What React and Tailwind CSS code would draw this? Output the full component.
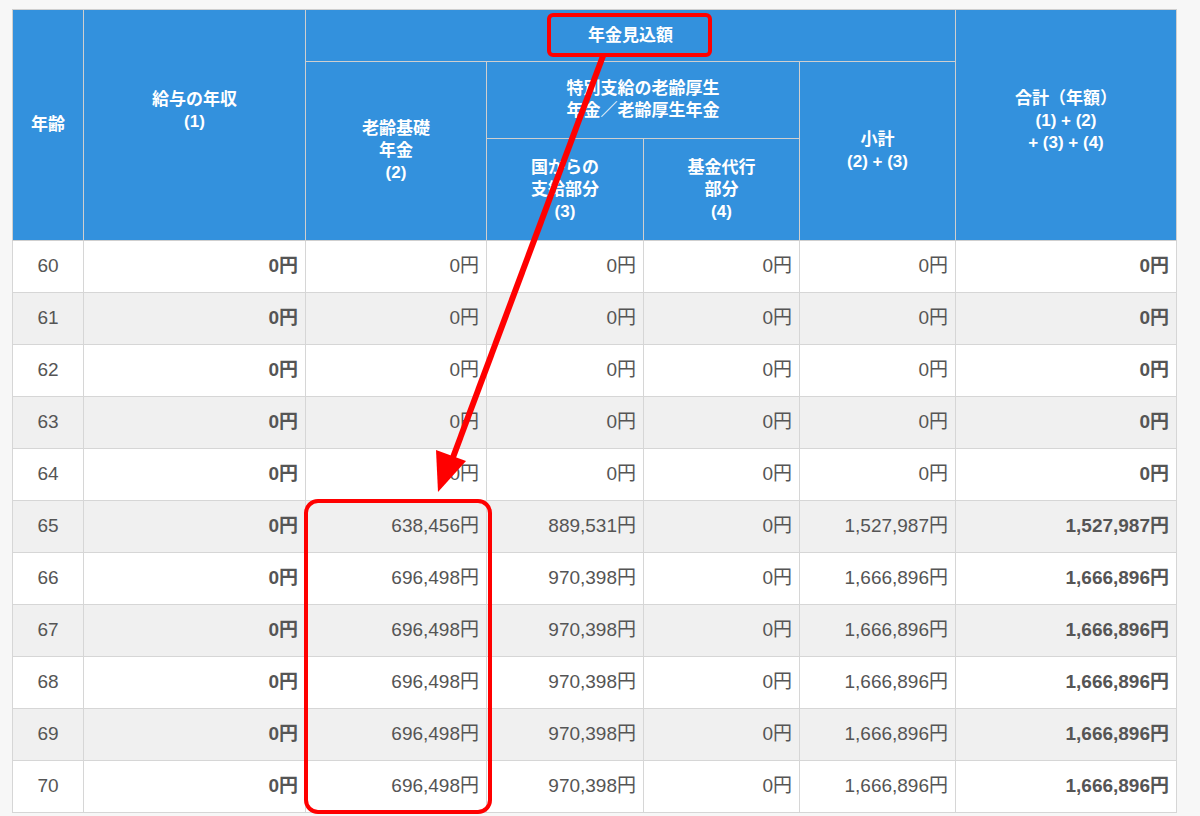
export default function App() {
  const rows = [
    [60,'0円','0円','0円','0円','0円','0円'],
    [61,'0円','0円','0円','0円','0円','0円'],
    [62,'0円','0円','0円','0円','0円','0円'],
    [63,'0円','0円','0円','0円','0円','0円'],
    [64,'0円','0円','0円','0円','0円','0円'],
    [65,'0円','638,456円','889,531円','0円','1,527,987円','1,527,987円'],
    [66,'0円','696,498円','970,398円','0円','1,666,896円','1,666,896円'],
    [67,'0円','696,498円','970,398円','0円','1,666,896円','1,666,896円'],
    [68,'0円','696,498円','970,398円','0円','1,666,896円','1,666,896円'],
    [69,'0円','696,498円','970,398円','0円','1,666,896円','1,666,896円'],
    [70,'0円','696,498円','970,398円','0円','1,666,896円','1,666,896円'],
  ];
  const th = "border border-[#cfcfcf] bg-[#3391dd] text-white font-bold text-[17px] leading-[22px] text-center align-middle";
  const td = "border border-[#d6d6d6] text-[19px] text-right pr-[7px] h-[52px]";
  return (
    <div className="relative w-[1200px] h-[816px] overflow-hidden bg-[#f7f7f7] pl-[12px] pt-[9px] text-[#555]" style={{fontFamily:'"Liberation Sans", "Noto Sans CJK JP", sans-serif'}}>
      <table className="table-fixed border-collapse w-[1164px]">
        <colgroup>
          <col className="w-[71px]"/><col className="w-[222px]"/><col className="w-[181px]"/><col className="w-[157px]"/><col className="w-[156px]"/><col className="w-[156px]"/><col className="w-[221px]"/>
        </colgroup>
        <thead>
          <tr className="h-[52px]">
            <th rowSpan={3} className={th}>年齢</th>
            <th rowSpan={3} className={th}><div className="-mt-[28px]">給与の年収<br/>(1)</div></th>
            <th colSpan={4} className={th}>年金見込額</th>
            <th rowSpan={3} className={th}><div className="-mt-[8px]">合計（年額）<br/>(1) + (2)<br/>+ (3) + (4)</div></th>
          </tr>
          <tr className="h-[77px]">
            <th rowSpan={2} className={th}>老齢基礎<br/>年金<br/>(2)</th>
            <th colSpan={2} className={th}>特別支給の老齢厚生<br/>年金／老齢厚生年金</th>
            <th rowSpan={2} className={th}>小計<br/>(2) + (3)</th>
          </tr>
          <tr className="h-[102px]">
            <th className={th}>国からの<br/>支給部分<br/>(3)</th>
            <th className={th}>基金代行<br/>部分<br/>(4)</th>
          </tr>
        </thead>
        <tbody>
          {rows.map((r,i)=>(
            <tr key={i} className={i%2 ? "bg-[#f0f0f0]" : "bg-white"}>
              <td className={td + " !text-center !pr-0"}>{r[0]}</td>
              <td className={td + " font-bold"}>{r[1]}</td>
              <td className={td}>{r[2]}</td>
              <td className={td}>{r[3]}</td>
              <td className={td}>{r[4]}</td>
              <td className={td}>{r[5]}</td>
              <td className={td + " font-bold"}>{r[6]}</td>
            </tr>
          ))}
        </tbody>
      </table>
      <div className="absolute left-[547px] top-[13px] w-[165px] h-[44px] border-[4px] border-[#f00] rounded-[6px]"></div>
      <div className="absolute left-[304px] top-[499px] w-[188px] h-[315px] border-[4px] border-[#f00] rounded-[14px]"></div>
      <svg className="absolute left-0 top-0" width="1200" height="816">
        <line x1="603" y1="56" x2="452" y2="460" stroke="#f00" strokeWidth="6"/>
        <polygon points="438,492 436,450 466,461" fill="#f00"/>
      </svg>
    </div>
  );
}
